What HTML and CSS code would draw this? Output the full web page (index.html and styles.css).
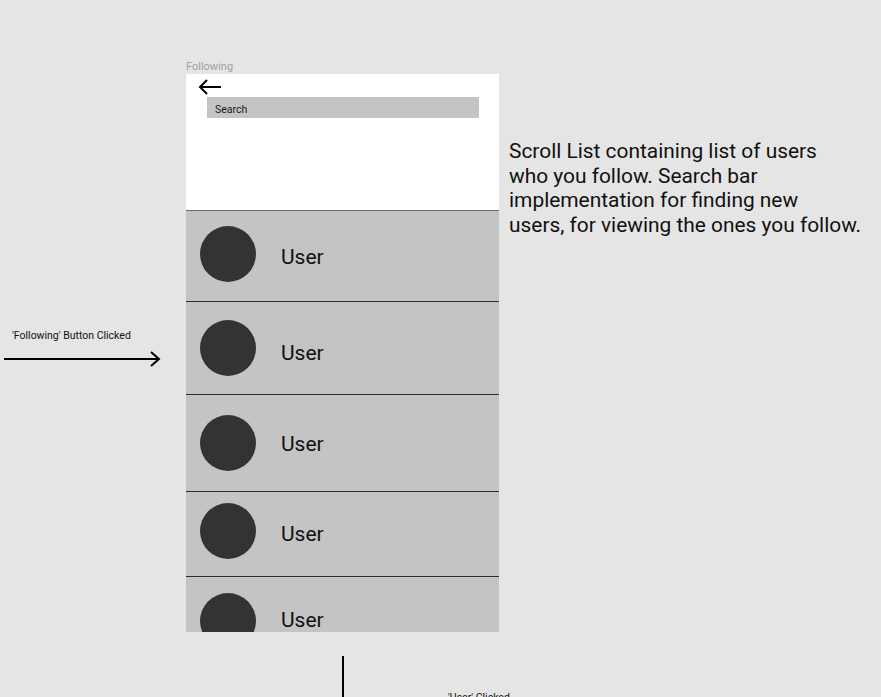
FILE: index.html
```html
<!DOCTYPE html>
<html lang="en">
<head>
<meta charset="utf-8">
<title>Following</title>
<link rel="stylesheet" href="styles.css">
</head>
<body>
<div class="board">
  <div class="left-note">
    <div class="note-small">'Following' Button Clicked</div>
    <svg class="h-arrow" width="158" height="18" viewBox="0 0 158 18">
      <line x1="0" y1="8" x2="155" y2="8" stroke="#000" stroke-width="2"/>
      <polyline points="147,1 155,8 147,15" fill="none" stroke="#000" stroke-width="2"/>
    </svg>
  </div>
  <div class="screen">
    <div class="screen-label">Following</div>
    <div class="frame">
      <div class="header">
        <svg class="back" width="24" height="16" viewBox="0 0 24 16">
          <line x1="2" y1="8" x2="23" y2="8" stroke="#000" stroke-width="2"/>
          <polyline points="9,1 2,8 9,15" fill="none" stroke="#000" stroke-width="2"/>
        </svg>
        <div class="search">Search</div>
      </div>
      <div class="row r1"><div class="avatar"></div><div class="name">User</div></div>
      <div class="row r2"><div class="avatar"></div><div class="name">User</div></div>
      <div class="row r3"><div class="avatar"></div><div class="name">User</div></div>
      <div class="row r4"><div class="avatar"></div><div class="name">User</div></div>
      <div class="row r5"><div class="avatar"></div><div class="name">User</div></div>
    </div>
  </div>
  <p class="side-note">Scroll List containing list of users<br>who you follow. Search bar<br>implementation for finding new<br>users, for viewing the ones you follow.</p>
</div>
<div class="bottom">
  <div class="v-line"></div>
  <div class="note-small bottom-text">'User' Clicked</div>
</div>
</body>
</html>
```
FILE: styles.css
```css
html, body {
  margin: 0;
  padding: 0;
  height: 697px;
  overflow: hidden;
}
body {
  background: #e5e5e5;
  font-family: Roboto, "Liberation Sans", sans-serif;
  color: #000;
}
.board {
  display: flex;
  align-items: flex-start;
  padding-top: 59px;
}
.left-note {
  width: 182px;
  padding-left: 4px;
  margin-top: 270px;
}
.note-small {
  font-size: 10.5px;
  line-height: 13px;
  color: #111;
}
.left-note .note-small {
  margin-left: 8px;
}
.h-arrow {
  display: block;
  margin-top: 9px;
}
.screen {
  width: 313px;
}
.screen-label {
  font-size: 11px;
  line-height: 15px;
  color: #a0a0a0;
}
.frame {
  height: 558px;
  overflow: hidden;
  background: #c4c4c4;
}
.header {
  background: #fff;
  height: 136px;
  padding-top: 5px;
  box-sizing: border-box;
}
.back {
  display: block;
  margin-left: 12px;
}
.search {
  margin: 2px 0 0 21px;
  width: 272px;
  height: 21px;
  background: #c4c4c4;
  font-size: 10.5px;
  line-height: 21px;
  padding: 2px 0 0 8px;
  box-sizing: border-box;
  color: #1a1a1a;
}
.row {
  display: flex;
  align-items: flex-start;
  border-top: 1px solid #2e2e2e;
  box-sizing: content-box;
  padding-left: 14px;
}
.r1 { border-top-color: #6a6a6a; }
.avatar {
  width: 56px;
  height: 56px;
  border-radius: 50%;
  background: #333333;
  flex: none;
}
.name {
  margin-left: 25px;
  font-size: 21px;
  line-height: 24px;
  color: #111;
}
.r1 { height: 90px; }
.r1 .avatar { margin-top: 15px; }
.r1 .name { margin-top: 34px; }
.r2 { height: 92px; }
.r2 .avatar { margin-top: 18px; }
.r2 .name { margin-top: 39px; }
.r3 { height: 96px; }
.r3 .avatar { margin-top: 20px; }
.r3 .name { margin-top: 37px; }
.r4 { height: 84px; }
.r4 .avatar { margin-top: 11px; }
.r4 .name { margin-top: 30px; }
.r5 { height: 80px; }
.r5 .avatar { margin-top: 16px; }
.r5 .name { margin-top: 31px; }
.side-note {
  margin: 80px 0 0 10px;
  white-space: nowrap;
  font-size: 20.9px;
  line-height: 24.5px;
  color: #111;
}
.bottom {
  display: flex;
  align-items: flex-start;
  padding-left: 342px;
  margin-top: 24px;
}
.v-line {
  width: 2px;
  height: 60px;
  background: #000;
}
.bottom-text {
  margin: 35px 0 0 104px;
}
```
